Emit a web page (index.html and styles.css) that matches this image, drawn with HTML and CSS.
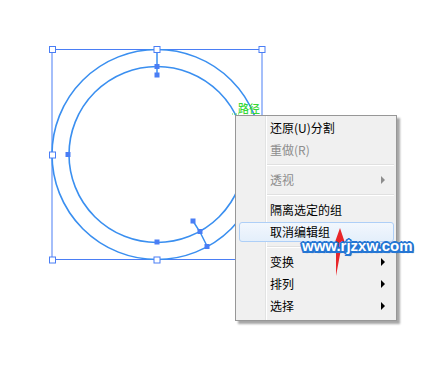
FILE: index.html
```html
<!DOCTYPE html>
<html>
<head>
<meta charset="utf-8">
<link rel="stylesheet" href="styles.css">
</head>
<body>
<div class="stage">
  <svg class="art" width="440" height="372" viewBox="0 0 440 372">
    <rect x="52" y="49.5" width="210" height="210" fill="none" stroke="#4a7ef5" stroke-width="1"/>
    <circle cx="157" cy="154.5" r="105" fill="none" stroke="#3a8ff0" stroke-width="1.6"/>
    <circle cx="157" cy="154.5" r="88" fill="none" stroke="#3a8ff0" stroke-width="1.6"/>
    <line x1="157" y1="50" x2="157" y2="75" stroke="#3a8ff0" stroke-width="1.5"/>
    <polyline points="193,221 200,232 207,246" fill="none" stroke="#3a8ff0" stroke-width="1.5"/>
    <g fill="#4a7ef5">
      <rect x="154.5" y="64" width="5" height="5"/>
      <rect x="154.5" y="72.5" width="5" height="5"/>
      <rect x="65.5" y="152" width="5" height="5"/>
      <rect x="154.5" y="239.5" width="5" height="5"/>
      <rect x="190.5" y="218.5" width="5" height="5"/>
      <rect x="197.5" y="229" width="5" height="5"/>
      <rect x="204.5" y="244" width="5" height="5"/>
    </g>
    <g fill="#fff" stroke="#4a7ef5" stroke-width="1">
      <rect x="49.5" y="46.5" width="6" height="6"/>
      <rect x="154" y="46.5" width="6" height="6"/>
      <rect x="259" y="46.5" width="6" height="6"/>
      <rect x="49.5" y="152" width="6" height="6"/>
      <rect x="49.5" y="257" width="6" height="6"/>
      <rect x="154" y="257" width="6" height="6"/>
    </g>
    <line x1="232" y1="114" x2="239" y2="114" stroke="#4ee04e" stroke-width="1" stroke-dasharray="1,1"/>
  </svg>

  <div class="menu">
    <div class="gutter"></div>
    <div class="items">
      <div class="item">还原(U)分割</div>
      <div class="item disabled">重做(R)</div>
      <div class="sep"></div>
      <div class="item disabled sub">透视</div>
      <div class="sep"></div>
      <div class="item">隔离选定的组</div>
      <div class="item hover">取消编辑组</div>
      <div class="sep"></div>
      <div class="item sub">变换</div>
      <div class="item sub">排列</div>
      <div class="item sub">选择</div>
    </div>
  </div>
  <span class="pathlabel">路径</span>

  <svg class="arrow" width="440" height="372" viewBox="0 0 440 372">
    <path d="M340,228 L347,249 L341.5,246.5 L336,276 L336,246.5 L332.5,249 Z" fill="#e8262a"/>
  </svg>
  <span class="watermark">www.rjzxw.com</span>
</div>
</body>
</html>
```

FILE: styles.css
```css
html, body {
  margin: 0;
  padding: 0;
  background: #ffffff;
}
.stage {
  position: relative;
  width: 440px;
  height: 372px;
  overflow: hidden;
  font-family: "Noto Sans CJK SC", "Liberation Sans", sans-serif;
}
.art, .arrow {
  position: absolute;
  left: 0;
  top: 0;
}
.pathlabel {
  position: absolute;
  left: 238px;
  top: 101px;
  font-size: 11px;
  line-height: 14px;
  font-weight: 500;
  color: #36d836;
}
.menu {
  position: absolute;
  left: 235px;
  top: 115px;
  width: 160px;
  height: 204px;
  background: #f0f0f0;
  border: 1px solid #979797;
  box-shadow: 3px 3px 2px rgba(0, 0, 0, 0.35);
  display: flex;
}
.gutter {
  width: 29px;
  border-right: 1px solid #e2e3e3;
  box-shadow: 1px 0 0 #ffffff;
  flex: none;
}
.items {
  flex: 1;
  padding-top: 1px;
  position: relative;
  z-index: 0;
}
.item {
  height: 22px;
  line-height: 22px;
  font-size: 12px;
  color: #000;
  padding-left: 4px;
  position: relative;
}
.item.disabled {
  color: #8d8d8d;
}
.item.sub::after {
  content: "";
  position: absolute;
  right: 11px;
  top: 7px;
  border-left: 4px solid #000;
  border-top: 4px solid transparent;
  border-bottom: 4px solid transparent;
}
.item.disabled.sub::after {
  border-left-color: #8d8d8d;
}
.item.hover {
  z-index: 0;
}
.item.hover::before {
  content: "";
  position: absolute;
  left: -27px;
  right: 2px;
  top: 1px;
  bottom: 1px;
  border: 1px solid #aecff7;
  border-radius: 3px;
  background: linear-gradient(#f2f7fd, #e4effb);
  z-index: -1;
}
.sep {
  height: 8px;
  position: relative;
}
.sep::before {
  content: "";
  position: absolute;
  left: 1px;
  right: 2px;
  top: 3px;
  border-top: 1px solid #e0e0e0;
  border-bottom: 1px solid #ffffff;
}
.watermark {
  position: absolute;
  left: 302px;
  top: 237px;
  font-family: "Liberation Sans", Arial, sans-serif;
  font-weight: bold;
  font-size: 15px;
  line-height: 18px;
  color: #ffffff;
  text-shadow:
    -2px 0 0 #2476d4, 2px 0 0 #2476d4, 0 -2px 0 #2476d4, 0 2px 0 #2476d4,
    -1.5px -1.5px 0 #2476d4, 1.5px -1.5px 0 #2476d4, -1.5px 1.5px 0 #2476d4, 1.5px 1.5px 0 #2476d4,
    2px 2px 1px #1a5fb0;
}
```
